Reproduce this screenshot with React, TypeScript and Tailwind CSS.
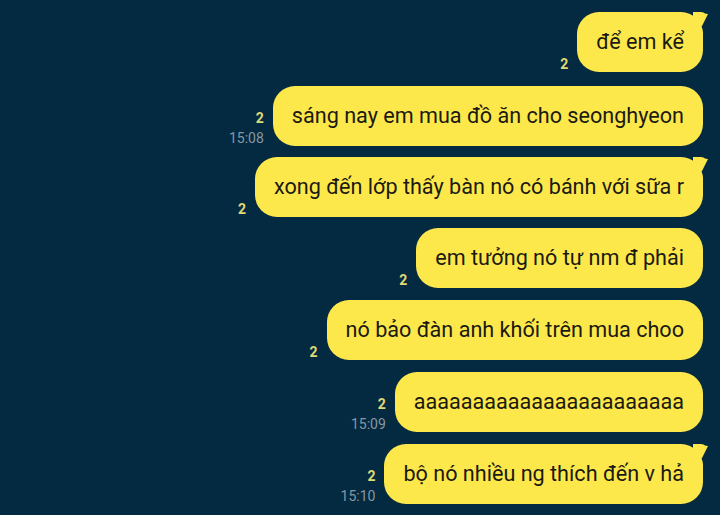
import React from "react";

type Msg = { text: string; time?: string; tail?: boolean; mt: string };

const msgs: Msg[] = [
  { text: "để em kể", tail: true, mt: "mt-[12px]" },
  { text: "sáng nay em mua đồ ăn cho seonghyeon", time: "15:08", mt: "mt-[14px]" },
  { text: "xong đến lớp thấy bàn nó có bánh với sữa r", tail: true, mt: "mt-[11px]" },
  { text: "em tưởng nó tự nm đ phải", mt: "mt-[11px]" },
  { text: "nó bảo đàn anh khối trên mua choo", mt: "mt-[12px]" },
  { text: "aaaaaaaaaaaaaaaaaaaaaaa", time: "15:09", mt: "mt-[12px]" },
  { text: "bộ nó nhiều ng thích đến v hả", time: "15:10", tail: true, mt: "mt-[12px]" },
];

function Row({ m }: { m: Msg }) {
  return (
    <div className={`flex justify-end items-end pr-[17px] ${m.mt}`}>
      <div className="flex flex-col items-end mr-[9px]">
        <span className="text-[14px] leading-[15px] font-bold text-[#e0d974]">2</span>
        {m.time && (
          <span className="mt-[4px] text-[14px] leading-[16px] text-[#8797a3]">{m.time}</span>
        )}
      </div>
      <div className="relative">
        <div className="h-[60px] flex items-center px-[19px] rounded-[22px] bg-[#fde84b] text-[#1b1a12] text-[21.6px] leading-none whitespace-nowrap">
          {m.text}
        </div>
        {m.tail && (
          <svg
            className="absolute top-0 right-[-6px]"
            width="16"
            height="22"
            viewBox="0 0 16 22"
          >
            <path d="M0 0 L8 0 Q14 0 11 6 L8 14 L10 22 L0 22 Z" fill="#fde84b" />
            <path d="M2 0 L15 2 L9 14 L0 14 Z" fill="#fde84b" />
          </svg>
        )}
      </div>
    </div>
  );
}

export default function App() {
  return (
    <div
      className="w-[720px] h-[515px] bg-[#032a40] overflow-hidden"
      style={{ fontFamily: "Roboto, 'Noto Sans', sans-serif" }}
    >
      {msgs.map((m, i) => (
        <Row key={i} m={m} />
      ))}
    </div>
  );
}
